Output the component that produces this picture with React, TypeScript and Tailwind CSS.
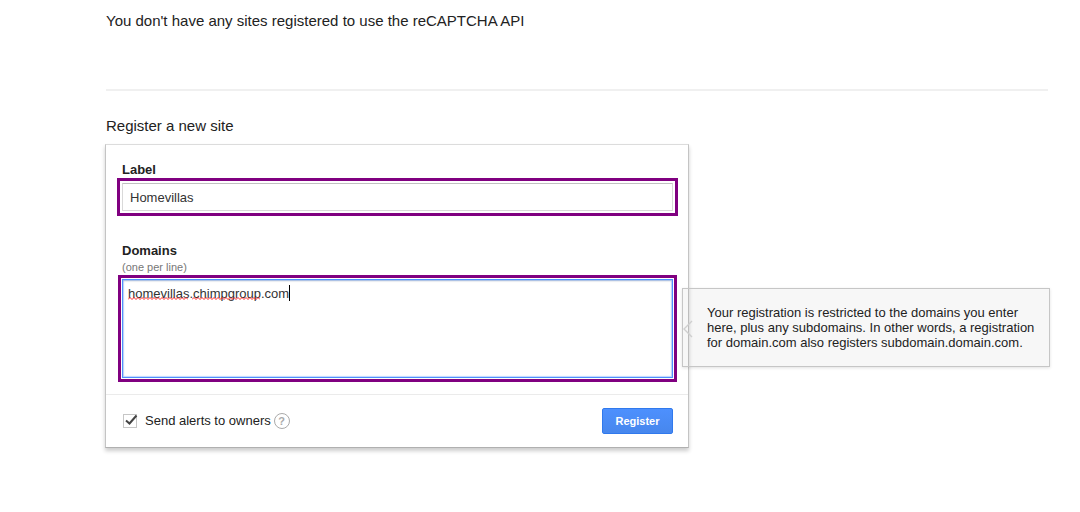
import React from "react";

function Squiggle({ width }: { width: number }) {
  let d = "M0 2.5";
  for (let x = 2; x <= width; x += 2) d += ` L${x} ${x % 4 === 2 ? 0.5 : 2.5}`;
  return (
    <svg width={width} height="3" viewBox={`0 0 ${width} 3`} fill="none" aria-hidden="true">
      <path d={d} stroke="#ff1010" strokeWidth="0.9" />
    </svg>
  );
}

function Hint() {
  return (
    <div
      id="domains-hint"
      className="absolute top-[143px] left-full -ml-1.5 w-[368px] border border-[#c6c6c6] bg-black/[0.03] py-4 pr-3 pl-6 text-[13px] leading-[15px] text-[#222] shadow-[0_1px_3px_rgba(0,0,0,0.12)]"
    >
      <svg
        className="absolute top-[31px] left-0"
        width="10"
        height="18"
        viewBox="0 0 10 18"
        fill="none"
        aria-hidden="true"
      >
        <path d="M9 1 L1 9 L9 17" stroke="#cfcfcf" strokeWidth="1.4" />
      </svg>
      Your registration is restricted to the domains you enter here, plus any subdomains. In other
      words, a registration for domain.com also registers subdomain.domain.com.
    </div>
  );
}

function RegisterForm() {
  return (
    <form
      onSubmit={(e) => e.preventDefault()}
      className="relative w-full max-w-[584px] border border-[#c4c4c4] border-t-[#dcdcdc] border-b-[#b0b0b0] bg-white text-[13px] text-[#222] shadow-[0_3px_4px_rgba(0,0,0,0.2)]"
    >
      <div className="pt-[17px] pr-2.5 pb-3 pl-[11px]">
        <label htmlFor="site-label" className="block pl-[5px] leading-4 font-bold">
          Label
        </label>
        <div className="border-3 border-[#800080] p-0.5">
          <input
            id="site-label"
            type="text"
            defaultValue="Homevillas"
            className="block h-7 w-full border border-[#d9d9d9] border-t-[#c0c0c0] px-[7px] text-[#333] outline-none"
          />
        </div>

        <label htmlFor="domains" className="mt-[27px] block pl-[5px] leading-4 font-bold">
          Domains
        </label>
        <p id="domains-note" className="pl-[5px] text-[11px] leading-4 text-[#777]">
          (one per line)
        </p>
        <div className="relative mx-px border-3 border-[#800080] p-px">
          <textarea
            id="domains"
            aria-describedby="domains-note domains-hint"
            spellCheck={false}
            defaultValue="homevillas.chimpgroup.com"
            className="block h-[99px] w-full resize-none border border-[#4d90fe] px-[5px] py-1.5 leading-4 text-[#333] shadow-[inset_0_0_1px_1px_rgba(77,144,254,0.35),inset_0_1px_2px_rgba(0,0,0,0.2)] outline-none"
          />
          <div className="pointer-events-none absolute top-[19px] left-[7px] flex gap-1">
            <Squiggle width={60} />
            <Squiggle width={68} />
          </div>
          <div className="pointer-events-none absolute top-[7px] left-[168px] h-4 w-px bg-black" />
        </div>
      </div>

      <div className="flex items-center border-t border-[#ebebeb] py-[13px] pr-[15px] pl-4">
        <label className="flex items-center">
          <span className="relative mr-2 ml-px flex">
            <input
              type="checkbox"
              defaultChecked
              className="peer size-3.5 appearance-none border border-[#c6c6c6]"
            />
            <svg
              className="pointer-events-none absolute bottom-0.5 left-0.5 hidden peer-checked:block"
              width="13"
              height="12"
              viewBox="0 0 13 12"
              fill="none"
              aria-hidden="true"
            >
              <path d="M1 6.5 L4.5 9.5 L11.5 1.5" stroke="#444" strokeWidth="2" />
            </svg>
          </span>
          Send alerts to owners
        </label>
        <button
          type="button"
          aria-label="Help"
          className="ml-[3px] flex size-4 items-center justify-center rounded-full border border-[#aaa] text-[11px] leading-none font-bold text-[#aaa]"
        >
          ?
        </button>
        <button
          type="submit"
          className="ml-auto h-[26px] min-w-[71px] rounded-xs border border-[#3079ed] bg-linear-to-b from-[#4d90fe] to-[#4787ed] px-3 text-[11px] font-bold text-white"
        >
          Register
        </button>
      </div>
      <Hint />
    </form>
  );
}

export default function App() {
  return (
    <main className="pt-2.5 pr-8 pb-16 pl-[105px] font-['Liberation_Sans',Arial,sans-serif] text-[#222]">
      <p className="pl-px text-[15px] leading-[22px]">
        You don't have any sites registered to use the reCAPTCHA API
      </p>
      <hr className="mt-[57px] ml-px border-t-2 border-[#f0f0f0]" />
      <h1 className="mt-6 mb-[7px] pl-px text-[15px] leading-[22px]">Register a new site</h1>
      <RegisterForm />
    </main>
  );
}
